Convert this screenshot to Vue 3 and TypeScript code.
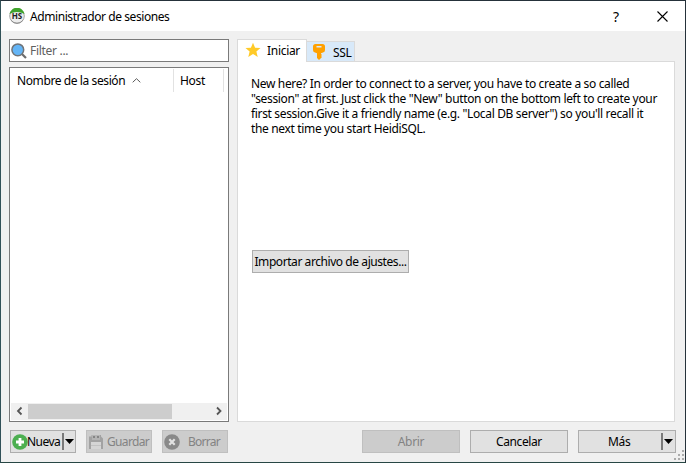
<script setup lang="ts">
const intro: string = [
  'New here? In order to connect to a server, you have to create a so called',
  '"session" at first. Just click the "New" button on the bottom left to create your',
  'first session.Give it a friendly name (e.g. "Local DB server") so you\'ll recall it',
  'the next time you start HeidiSQL.',
].join('\n')
</script>

<template>
  <div class="window">
    <header class="titlebar">
      <svg class="app-icon" width="16" height="16" viewBox="0 0 16 16">
        <circle cx="8" cy="8" r="7.300" fill="#ededed" stroke="#a4a4a4" stroke-width="1" />
        <path d="M.6 6A7.500 7.500 0 0 1 15.400 6L12.500 4.800Q8 3 3.500 4.800Z" fill="#3fa32c" />
        <path d="M2.200 12.500A7.400 7.400 0 0 0 13.800 12.500" fill="none" stroke="#8c8c8c" />
        <text x="8" y="11" text-anchor="middle" font-size="8" font-weight="bold" letter-spacing="0" textLength="10.500" lengthAdjust="spacingAndGlyphs" fill="#222">HS</text>
      </svg>
      <span class="title">Administrador de sesiones</span>
      <span class="help">?</span>
      <svg class="close" width="11" height="11" viewBox="0 0 11 11"><path d="M.5 .5L10.500 10.500M10.500 .5L.5 10.500" stroke="#000" stroke-width="1.1" /></svg>
    </header>

    <main class="content">
      <section class="left">
        <div class="filter">
          <svg width="16" height="16" viewBox="0 0 16 16">
            <path d="M10.500 10.500L15 15" stroke="#6d6d6d" stroke-width="2.200" />
            <circle cx="6.800" cy="6.800" r="5.900" fill="#64b5f6" stroke="#707478" stroke-width="1.500" />
          </svg>
          <span>Filter ...</span>
        </div>
        <div class="list">
          <div class="list-head">
            <div class="col name"><span>Nombre de la sesión</span>
              <svg width="9" height="5" viewBox="0 0 9 5"><path d="M.7 4.300L4.500 .7L8.300 4.300" fill="none" stroke="#5a5a5a" /></svg>
            </div>
            <div class="col host"><span>Host</span></div>
          </div>
          <div class="scroll">
            <svg width="17" height="17" viewBox="0 0 17 17"><path d="M10.500 4.500L7 8L10.500 11.500" fill="none" stroke="#555" stroke-width="1.800" /></svg>
            <div class="thumb"></div>
            <svg class="right-arrow" width="17" height="17" viewBox="0 0 17 17"><path d="M7 4.500L10.500 8L7 11.500" fill="none" stroke="#555" stroke-width="1.800" /></svg>
          </div>
        </div>
      </section>

      <section class="right">
        <div class="tabs">
          <div class="tab active">
            <svg width="16" height="16" viewBox="0 0 16 16"><path d="M8 .7L10.100 5.700L15.500 6.100L11.400 9.600L12.700 14.900L8 12L3.300 14.900L4.600 9.600L.5 6.100L5.900 5.700Z" fill="#ffca28" /></svg>
            <span>Iniciar</span>
          </div>
          <div class="tab ssl">
            <svg width="16" height="16" viewBox="0 0 16 16"><path fill-rule="evenodd" d="M4.500 0H11.500Q14 0 14 2.500V6Q14 8 12 8.500L10 9.200V10L11 11L10 12L11 13L9.800 14.200L8 16L6 14V9.200L4 8.500Q2 8 2 6V2.500Q2 0 4.500 0ZM5.500 2V3.500H10.500V2Z" fill="#ffa000" /></svg>
            <span>SSL</span>
          </div>
        </div>
        <div class="panel">
          <p class="intro">{{ intro }}</p>
          <button class="btn import"><span>Importar archivo de ajustes...</span></button>
        </div>
      </section>
    </main>

    <footer class="actions">
      <button class="btn small nueva">
        <svg width="16" height="16" viewBox="0 0 16 16"><circle cx="8" cy="8" r="7.800" fill="#4caf50" /><path d="M8 4V12M4 8H12" stroke="#fff" stroke-width="2.800" /></svg>
        <span>Nueva</span><i class="divider"></i><i class="arrow"></i>
      </button>
      <button class="btn small disabled guardar" disabled>
        <svg width="16" height="16" viewBox="0 0 16 16"><path d="M1 2.500H3.500V1H13V2.500L15 4.500V15H1Z" fill="#a2a2a2" /><path d="M4 1H12V6H4Z" fill="#b4b4b4" /><path d="M5 2H7V4H5ZM9 2H11V4H9Z" fill="#858585" /><path d="M3 8H13V15H3Z" fill="#d5d5d5" /><path d="M3 11.500H13" stroke="#c2c2c2" /></svg>
        <span>Guardar</span>
      </button>
      <button class="btn small disabled borrar" disabled>
        <svg width="16" height="16" viewBox="0 0 16 16"><circle cx="8" cy="8" r="7.800" fill="#898989" /><path d="M5.300 5.300L10.700 10.700M10.700 5.300L5.300 10.700" stroke="#e2e2e2" stroke-width="2.200" /></svg>
        <span>Borrar</span>
      </button>
      <button class="btn wide disabled abrir" disabled><span>Abrir</span></button>
      <button class="btn wide"><span>Cancelar</span></button>
      <button class="btn wide mas"><span>Más</span><i class="divider"></i><i class="arrow"></i></button>
      <svg class="grip" width="11" height="11" viewBox="0 0 11 11"><path d="M8 0h2v2h-2zM4 4h2v2h-2zM8 4h2v2h-2zM0 8h2v2h-2zM4 8h2v2h-2zM8 8h2v2h-2z" fill="#ababab" /></svg>
    </footer>
  </div>
</template>

<style>
body { margin: 0; overflow: hidden; }
</style>

<style scoped>
* { box-sizing: border-box; }
svg { flex: none; display: block; }
span { white-space: nowrap; }
.window {
  position: relative; width: 686px; height: 463px; display: flex; flex-direction: column;
  background: #f0f0f0; border: 1px solid #25313a; border-left-color: #315158; border-bottom-color: #274744;
  font: 12px/15px "Noto Sans", "Open Sans", sans-serif; color: #000; letter-spacing: -.4px;
}
.titlebar { height: 30px; flex: none; background: #fff; display: flex; align-items: center; padding-left: 8px; }
.title { margin-left: 5px; letter-spacing: -.42px; }
.help { margin-left: auto; width: 8px; font-size: 14px; }
.close { margin: 0 17px 0 36px; }
.content { display: flex; padding: 8px 10px 0 8px; gap: 8px; height: 391px; }
.left { width: 220px; display: flex; flex-direction: column; gap: 5px; }
.filter { height: 23px; border: 1px solid #7a7a7a; background: #fff; display: flex; align-items: center; gap: 3px; padding-left: 1px; color: #606060; }
.filter span { letter-spacing: -.3px; }
.list { height: 355px; border: 1px solid #7a7a7a; background: #fff; padding: 1px; display: flex; flex-direction: column; }
.list-head { display: flex; height: 23px; }
.col { display: flex; align-items: center; border-right: 1px solid #e2e2e2; }
.col.name { width: 163px; padding-left: 6px; }
.col.name span { width: 115px; }
.col.host { width: 50px; padding-left: 6px; letter-spacing: -.3px; }
.scroll { margin-top: auto; height: 17px; background: #f0f0f0; display: flex; }
.thumb { width: 144px; height: 15px; margin-top: 1px; background: #cdcdcd; }
.right-arrow { margin-left: auto; }
.right { width: 438px; display: flex; flex-direction: column; }
.tabs { height: 23px; display: flex; align-items: flex-end; margin-bottom: -1px; position: relative; letter-spacing: -.3px; }
.tab { display: flex; border: 1px solid #dadada; }
.tab.active { width: 70px; height: 23px; background: #fff; border-bottom: 0; padding: 2px 0 0 7px; gap: 6px; }
.tab.ssl { width: 48px; height: 21px; background: #d8e9f9; border-left: 0; padding: 2px 0 0 4px; gap: 6px; }
.tab span { margin-top: 1px; }
.panel { height: 361px; background: #fff; border: 1px solid #dadada; padding: 14px 0 0 14px; display: flex; flex-direction: column; align-items: flex-start; }
.intro { margin: 0 0 0 -1px; height: 174px; white-space: pre; letter-spacing: -.345px; }
.btn {
  display: flex; align-items: center; justify-content: center; height: 23px; padding: 0; margin: 0;
  border: 1px solid #adadad; background: #e1e1e1; font: inherit; color: #000; letter-spacing: inherit;
}
.btn.disabled { background: #ccc; border-color: #bfbfbf; color: #838383; }
.import { width: 157px; letter-spacing: -.43px; }
.actions { display: flex; padding: 8px 0 0 9px; position: relative; flex: 1; }
.small { width: 66px; margin-right: 10px; justify-content: flex-start; padding-left: 1px; }
.nueva { letter-spacing: -.55px; }
.nueva svg { margin-right: -1px; }
.nueva span { width: 35px; text-align: left; }
.guardar { gap: 3px; letter-spacing: -.65px; }
.borrar { gap: 8px; letter-spacing: -.75px; }
.wide { width: 98px; margin-right: 10px; }
.abrir { margin-left: 124px; letter-spacing: -.3px; }
.divider { width: 2px; height: 17px; background: #7a7a7a; }
.arrow { width: 9px; height: 5px; background: #000; clip-path: polygon(0 0, 100% 0, 50% 100%); }
.nueva .arrow { margin-left: 1px; }
.mas { justify-content: flex-start; padding-left: 29px; margin-right: 0; letter-spacing: -.3px; }
.mas .divider { margin-left: auto; }
.mas .arrow { margin: 0 2px 0 1px; }
.grip { position: absolute; right: 0; bottom: 1px; }
</style>
